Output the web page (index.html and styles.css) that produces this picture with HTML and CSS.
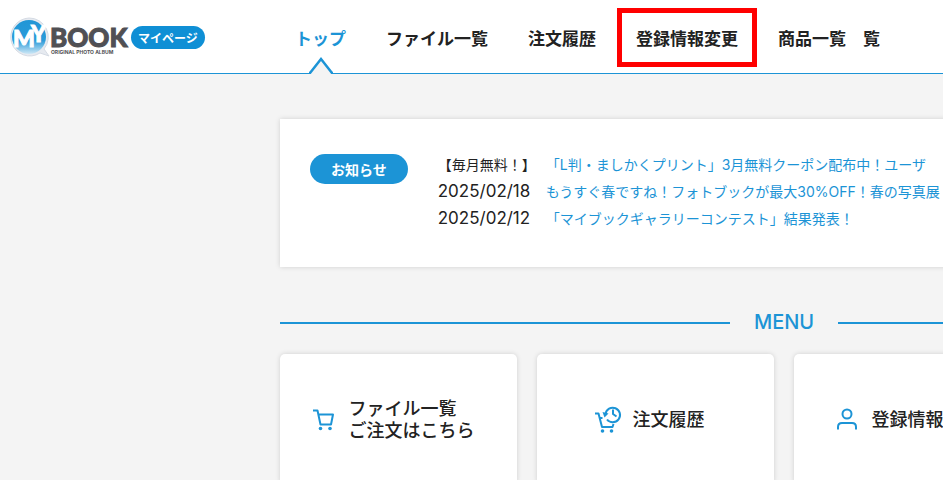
FILE: index.html
```html
<!DOCTYPE html>
<html lang="ja">

<head>
    <meta charset="UTF-8">
    <meta name="viewport" content="width=device-width, initial-scale=1.0">
    <title>マイページ | MYBOOK</title>
    <link rel="stylesheet" href="styles.css">
</head>

<body>
    <header class="header">
        <a class="logo" href="#">
            <svg class="logo-mark" viewBox="0 0 120 42" role="img" aria-label="MYBOOK">
                <defs>
                    <linearGradient id="globe" x1="0" y1="0" x2="0" y2="1">
                        <stop offset="0" stop-color="#2196d6" />
                        <stop offset="0.6" stop-color="#2a9bd9" />
                        <stop offset="1" stop-color="#cfe8f6" />
                    </linearGradient>
                </defs>
                <path d="M20 1a19 19 0 1 0 11 35l9 3-5-7A19 19 0 0 0 20 1z" fill="#e6eaf0" stroke="#d5dbe4" />
                <circle cx="20" cy="20" r="17" fill="url(#globe)" />
                <text class="logo-my" x="4" y="30">M</text>
                <text class="logo-my" x="22" y="25">Y</text>
                <text class="logo-book" x="41" y="30">BOOK</text>
                <text class="logo-sub" x="42" y="37">ORIGINAL PHOTO ALBUM</text>
            </svg>
            <span class="logo-tag">マイページ</span>
        </a>
        <nav class="nav">
            <a class="nav-link active" href="#">トップ
                <svg class="nav-arrow" viewBox="0 0 26 18" aria-hidden="true">
                    <path d="M2 17 13 3l11 14v1H2z" fill="#f4f4f4" />
                    <path d="M1 17h1L13 3l11 14h1" fill="none" stroke="#1c94d6" stroke-width="2.500" />
                </svg>
            </a>
            <a class="nav-link" href="#">ファイル一覧</a>
            <a class="nav-link" href="#">注文履歴</a>
            <a class="nav-link marked" href="#">登録情報変更</a>
            <a class="nav-link" href="#">商品一覧　覧</a>
        </nav>
    </header>

    <main class="main">
        <section class="info">
            <h2 class="info-title">お知らせ</h2>
            <ul class="info-list">
                <li><span class="info-label">【毎月無料！】</span><a href="#">「L判・ましかくプリント」3月無料クーポン配布中！ユーザ</a></li>
                <li><time class="info-date">2025/02/18</time><a href="#">もうすぐ春ですね！フォトブックが最大30%OFF！春の写真展</a></li>
                <li><time class="info-date">2025/02/12</time><a href="#">「マイブックギャラリーコンテスト」結果発表！</a></li>
            </ul>
        </section>

        <h2 class="menu-title">MENU</h2>

        <div class="menu">
            <a class="card" href="#">
                <svg class="card-icon" viewBox="0 0 30 30" aria-hidden="true">
                    <path d="M4 5.500h4.500l3 14h10.500l2-10H9.500" />
                    <circle class="dot" cx="11.500" cy="23.500" r="1.800" />
                    <circle class="dot" cx="21" cy="23.500" r="1.800" />
                </svg>
                <span class="card-text">ファイル一覧<br>ご注文はこちら</span>
            </a>
            <a class="card" href="#">
                <svg class="card-icon" viewBox="0 0 30 30" aria-hidden="true">
                    <path d="M2 8.500h3.500l3.500 13.500h10.500l1-3M7 13h2.500" />
                    <path d="M12.500 9a7.300 7.300 0 1 1 1.500 5.500M20 4.500V9l3.500 2.500" />
                    <path class="dot" d="M9.500 7l6 1.500-4 4z" />
                    <circle class="dot" cx="9.500" cy="26" r="1.800" />
                    <circle class="dot" cx="18.500" cy="26" r="1.800" />
                </svg>
                <span class="card-text">注文履歴</span>
            </a>
            <a class="card" href="#">
                <svg class="card-icon" viewBox="0 0 30 30" aria-hidden="true">
                    <circle cx="15" cy="9" r="4.500" />
                    <path d="M6 24.500v-2.500q0-4 4-4h10q4 0 4 4v2.500" />
                </svg>
                <span class="card-text">登録情報変更</span>
            </a>
        </div>
    </main>
</body>

</html>
```

FILE: styles.css
```css
* {
    box-sizing: border-box;
}

body {
    margin: 0;
    background-color: #f4f4f4;
    color: #222;
    font-family: "Noto Sans CJK JP", sans-serif;
    overflow: hidden;
}

a {
    color: #1c94d6;
    text-decoration: none;
}

/* Header */
.header {
    display: flex;
    align-items: center;
    height: 74px;
    padding-top: 2px;
    padding-left: 9px;
    background-color: #fff;
    border-bottom: 1px solid #1c94d6;
}

.logo {
    display: flex;
    align-items: center;
    flex: 0 0 286px;
    gap: 2px;
}

.logo-mark {
    width: 120px;
    height: 42px;
}

.logo-my {
    font: 900 23px Lato, sans-serif;
    fill: #fff;
    stroke: #fff;
}

.logo-book {
    font: 900 26px Lato, sans-serif;
    fill: #505054;
    stroke: #505054;
}

.logo-sub {
    font: 700 5px Inter, sans-serif;
    fill: #505054;
}

.logo-tag {
    padding: 0 7px;
    border-radius: 12px;
    background-color: #0f8fd5;
    color: #fff;
    font-size: 12px;
    font-weight: bold;
    line-height: 23px;
}

.nav {
    display: flex;
    gap: 40px;
}

.nav-link {
    position: relative;
    color: #222;
    font-size: 17px;
    font-weight: 700;
    line-height: 21px;
    white-space: nowrap;
}

.nav-link.active {
    color: #1c94d6;
}

.nav-link.marked {
    outline: 5px solid #f00;
    outline-offset: 14px;
}

/* Arrow over the header border */
.nav-arrow {
    position: absolute;
    top: 29px;
    left: 50%;
    width: 26px;
    height: 18px;
    margin-left: -13px;
}

/* Main column */
.main {
    width: 1288px;
    padding: 45px 0 0 280px;
}

.info {
    display: flex;
    align-items: flex-start;
    gap: 30px;
    padding: 32px 30px 35px;
    background-color: #fff;
    box-shadow: 0 0 5px rgba(0, 0, 0, 0.15);
}

.info-title {
    margin: 3px 0 0;
    padding: 0 21px;
    border-radius: 15px;
    background-color: #1c94d6;
    color: #fff;
    font-size: 14px;
    line-height: 30px;
}

.info-list {
    margin: 0;
    padding: 0;
    list-style: none;
    font-family: Inter, "Noto Sans CJK JP", sans-serif;
    font-size: 14px;
    line-height: 27px;
}

.info-list li {
    display: grid;
    grid-template-columns: 108px auto;
    align-items: center;
    white-space: nowrap;
}

.info-date {
    font-size: 17px;
}

.menu-title {
    display: flex;
    align-items: center;
    gap: 24px;
    margin: 40px 0 16px;
    color: #1c94d6;
    font-family: Inter, sans-serif;
    font-size: 20px;
    font-weight: 500;
    line-height: 31px;
}

.menu-title::before,
.menu-title::after {
    content: "";
    flex: 1;
    height: 2px;
    background-color: #1c94d6;
}

/* Menu cards */
.menu {
    display: grid;
    grid-template-columns: repeat(4, 1fr);
    gap: 20px;
}

.card {
    display: flex;
    align-items: center;
    justify-content: center;
    gap: 10px;
    min-height: 131px;
    padding-right: 14px;
    border-radius: 5px;
    background-color: #fff;
    box-shadow: 0 0 5px rgba(0, 0, 0, 0.15);
    color: #222;
    font-size: 18px;
    font-weight: 500;
    line-height: 22px;
}

.card-icon {
    width: 30px;
    height: 30px;
    fill: none;
    stroke: #1c94d6;
    stroke-width: 2;
    stroke-linejoin: round;
}

.card-icon .dot {
    fill: #1c94d6;
    stroke: none;
}

.card-text {
    padding-bottom: 4px;
}
```
